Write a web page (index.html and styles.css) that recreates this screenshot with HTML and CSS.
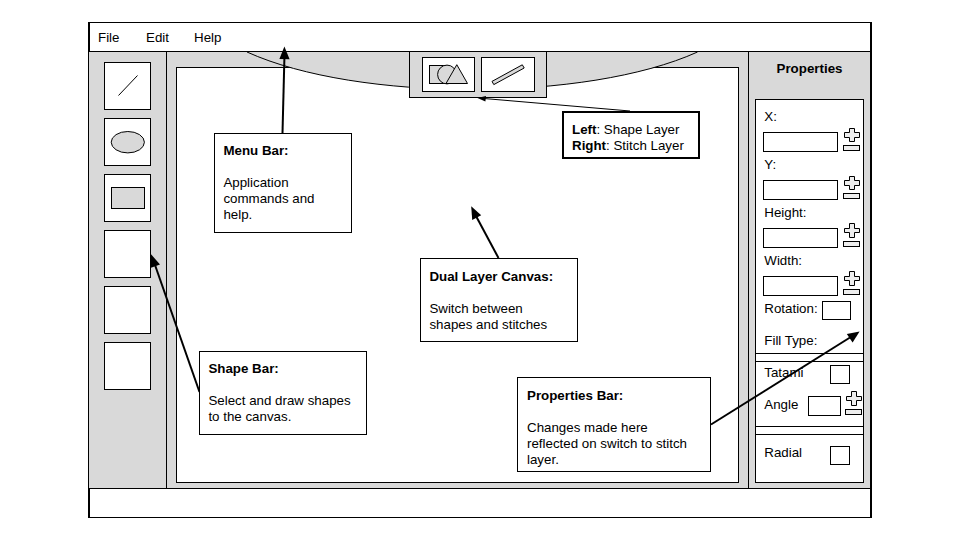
FILE: index.html
```html
<!DOCTYPE html>
<html lang="en">
<head>
<meta charset="utf-8">
<title>Dual Layer Canvas</title>
<link rel="stylesheet" href="styles.css">
</head>
<body>
<svg class="defs" width="0" height="0">
  <defs>
    <g id="stepper">
      <path d="M5.500 .5h5v5h5v4h-5v5h-5v-5h-5v-4h5z"/>
      <rect x="-.5" y="18.500" width="16" height="5"/>
    </g>
    <g id="stepper-short">
      <path d="M5.500 .5h5v4h5v5h-5v4h-5v-4h-5v-5h5z"/>
      <rect x="-.5" y="17.500" width="16" height="5"/>
    </g>
  </defs>
</svg>
<div class="window">
  <nav class="menu">
    <span>File</span><span>Edit</span><span>Help</span>
  </nav>
  <main class="workspace">
    <aside class="shape-bar">
      <div class="tool"><svg width="45" height="46"><path d="M13.5 32.5L32.5 12.5"/></svg></div>
      <div class="tool"><svg width="45" height="46"><ellipse cx="22.8" cy="23.2" rx="16.6" ry="10.7"/></svg></div>
      <div class="tool"><svg width="45" height="46"><rect x="6.5" y="12.5" width="33" height="21"/></svg></div>
      <div class="tool"></div>
      <div class="tool"></div>
      <div class="tool"></div>
    </aside>
    <section class="stage">
      <div class="canvas"></div>
      <svg class="drape" width="452" height="46"><path d="M0 0C110 50 340 50 450.5 0"/></svg>
      <div class="layer-tab">
        <div class="layer"><svg width="51" height="33">
          <rect x="6.5" y="7.5" width="18" height="18"/>
          <circle cx="24" cy="16.5" r="9.4"/>
          <path d="M23 25.5L33.8 6.7L44.5 25.5z"/>
        </svg></div>
        <div class="layer layer-stitch"><svg width="52" height="33">
          <path d="M10 23.4L40.3 6.8L42.2 10L11.8 26.6z"/>
        </svg></div>
      </div>
    </section>
    <aside class="properties">
      <h2>Properties</h2>
      <div class="panel">
        <div class="field"><label>X:</label><div class="entry"><i></i><svg width="17" height="24"><use href="#stepper-short" x="1"/></svg></div></div>
        <div class="field"><label>Y:</label><div class="entry"><i></i><svg width="17" height="24"><use href="#stepper-short" x="1"/></svg></div></div>
        <div class="field"><label>Height:</label><div class="entry tall"><i></i><svg width="17" height="24"><use href="#stepper" x="1"/></svg></div></div>
        <div class="field"><label>Width:</label><div class="entry tall"><i></i><svg width="17" height="24"><use href="#stepper" x="1"/></svg></div></div>
        <div class="row rotation"><label>Rotation:</label><i></i></div>
        <div class="row fill-type"><label>Fill Type:</label></div>
        <div class="rule"></div>
        <div class="row tatami"><label>Tatami</label><i></i></div>
        <div class="row angle"><label>Angle</label><i></i><svg width="17" height="24"><use href="#stepper" x="1"/></svg></div>
        <div class="rule"></div>
        <div class="row radial"><label>Radial</label><i></i></div>
      </div>
    </aside>
  </main>
  <footer class="status"></footer>
</div>

<svg class="arrows" width="960" height="540">
  <g class="shaft">
    <path d="M282.5 133L284.4 58"/>
    <path d="M498.5 258L476 216"/>
    <path d="M199.5 392L155 265"/>
    <path d="M711 424.5L850 337.5"/>
    <path class="thin" d="M630 111L484 98.5"/>
  </g>
  <path d="M284.4 46.5L289.6 59.3L279.4 59z"/>
  <path d="M471.2 206.2L481.2 215.3L472.2 220z"/>
  <path d="M151 254.2L160 264.5L151 267.8z"/>
  <path d="M859.6 331.4L852.6 342.5L846.8 334z"/>
  <path d="M477.5 98L486 96L485.4 101.4z"/>
</svg>

<div class="note note-menu"><b>Menu Bar:</b><p>Application<br>commands and<br>help.</p></div>
<div class="note note-shape"><b>Shape Bar:</b><p>Select and draw shapes<br>to the canvas.</p></div>
<div class="note note-canvas"><b>Dual Layer Canvas:</b><p>Switch between<br>shapes and stitches</p></div>
<div class="note note-props"><b>Properties Bar:</b><p>Changes made here<br>reflected on switch to stitch<br>layer.</p></div>
<div class="note note-layers"><b>Left</b>: Shape Layer<br><b>Right</b>: Stitch Layer</div>
</body>
</html>
```
FILE: styles.css
```css
* { box-sizing: border-box; }

body {
  margin: 0;
  width: 960px;
  height: 540px;
  overflow: hidden;
  position: relative;
  background: #fff;
  color: #000;
  font: 13.333px/16px "Liberation Sans", Arial, sans-serif;
}

svg { display: block; }
.defs { position: absolute; }

.window {
  width: 784px;
  height: 496px;
  margin: 22px 0 0 88px;
  display: grid;
  grid-template-rows: 30px 436px 30px;
  position: absolute;
}

.menu {
  display: flex;
  border: solid #000;
  border-width: 1px 2px 1px 2px;
  padding: 7px 0 0 8px;
}
.menu span { width: 48px; }

.workspace {
  display: grid;
  grid-template-columns: 78px 582px 121px;
  background: #d9d9d9;
  border: solid #000;
  border-width: 0 2px 0 1px;
}

.status {
  border: solid #000;
  border-width: 1px 2px 1px 2px;
}

.shape-bar {
  border-right: 1px solid #000;
  padding: 10px 0 0 15px;
  display: flex;
  flex-direction: column;
  gap: 8px;
}
.tool {
  width: 47px;
  height: 48px;
  border: 1px solid #000;
  background: #fff;
}
.tool svg, .layer svg { fill: #d9d9d9; stroke: #000; stroke-width: 1; }

.stage {
  position: relative;
  border-right: 1px solid #000;
  padding: 15px 9px 5px;
}
.canvas {
  height: 416px;
  background: #fff;
  border: 1px solid #000;
}
.drape {
  position: absolute;
  left: 80px;
  top: 0;
  fill: #d9d9d9;
  stroke: #000;
}
.layer-tab {
  position: absolute;
  left: 242px;
  top: -1px;
  width: 138px;
  height: 47px;
  display: flex;
  gap: 6px;
  padding: 5px 0 0 12px;
  border: 1px solid #000;
  background: #d9d9d9;
}
.layer {
  width: 53px;
  height: 35px;
  border: 1px solid #000;
  background: #fff;
}
.layer-stitch { width: 54px; }

.properties { padding: 9px 6px 0; }
.properties h2 {
  margin: 0;
  height: 38px;
  font-size: inherit;
  text-align: center;
}
.panel {
  height: 384px;
  border: 1px solid #000;
  background: #fff;
  padding-top: 9px;
}
.panel i {
  display: block;
  border: 1px solid #000;
  background: #fff;
}
.panel svg { fill: #eee; stroke: #000; overflow: visible; }
.panel label { display: block; padding-left: 8.3px; }
.field { height: 48px; }
.entry {
  display: flex;
  gap: 5px;
  margin-top: 2px;
  padding-left: 7px;
}
.entry i { width: 75px; height: 20px; margin-top: 5px; }
.entry svg { margin-top: 1px; }
.tall svg { margin-top: 0; }
.row { display: flex; }
.row label { flex: none; }
.rotation { height: 32px; }
.rotation label { width: 66px; }
.rotation i { width: 29px; height: 19px; }
.fill-type { height: 20px; }
.rule {
  height: 9px;
  border: solid #000;
  border-width: 1px 0;
}
.tatami { height: 29px; }
.tatami label, .radial label { width: 74px; padding-top: 3px; }
.tatami i { width: 20px; height: 19px; margin-top: 3px; }
.angle { height: 35px; }
.angle label { width: 52px; padding-top: 6px; }
.angle i { width: 33px; height: 20px; margin-top: 5px; }
.angle svg { margin-left: 4px; }
.radial label { padding-top: 10px; }
.radial i { width: 20px; height: 19px; margin-top: 11px; }

.arrows { position: absolute; left: 0; top: 0; }
.shaft { fill: none; stroke: #000; stroke-width: 2; }
.shaft .thin { stroke-width: 1; }

.note {
  position: absolute;
  padding: 9px 0 0 8.4px;
  border: 1px solid #000;
  background: #fff;
  white-space: nowrap;
}
.note p { margin: 16px 0 0; }
.note-menu { left: 214px; top: 133px; width: 138px; height: 100px; }
.note-shape { left: 199px; top: 351px; width: 168px; height: 84px; }
.note-canvas { left: 420px; top: 258px; width: 158px; height: 84px; padding-top: 10px; }
.note-props { left: 517px; top: 377px; width: 194px; height: 95px; padding-top: 10px; padding-left: 9px; }
.note-layers {
  left: 562px;
  top: 111px;
  width: 138px;
  height: 48px;
  border-width: 2px;
  padding: 9px 0 0 8px;
}
```
